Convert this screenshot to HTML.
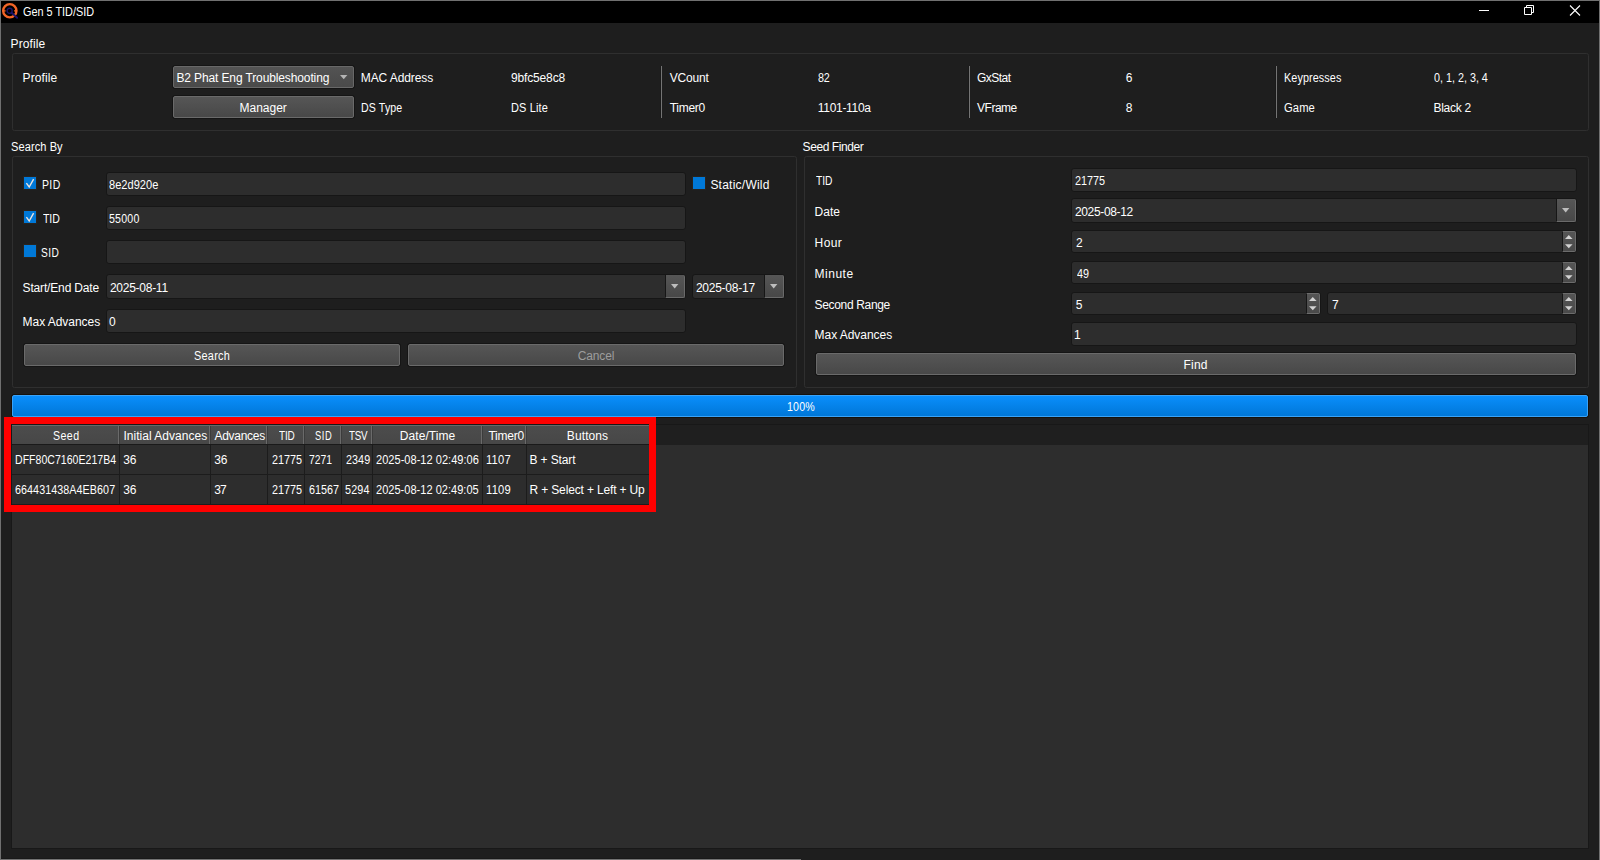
<!DOCTYPE html>
<html lang="en"><head><meta charset="utf-8"><title>Gen 5 TID/SID</title>
<style>
html,body{margin:0;padding:0;}
body{width:1600px;height:860px;background:#1e1e1e;position:relative;overflow:hidden;font-family:"Liberation Sans",sans-serif;font-size:12px;color:#fff;}
.a{position:absolute;box-sizing:border-box;}
.t{position:absolute;transform-origin:0 0;white-space:pre;line-height:14px;font-size:12px;color:#fff;}
.win{left:0;top:0;width:1600px;height:860px;border:1px solid #707070;border-bottom:none;pointer-events:none;}
.tb{left:1px;top:1px;width:1598px;height:22px;background:#000;}
.gb{border:1px solid #2f2f2f;border-radius:2.5px;}
.le{background:#2d2d2d;border:1px solid #161616;border-radius:3px;}
.btn{border:1px solid #151515;border-radius:3px;background:#151515;}
.btn i{position:absolute;left:0;top:0;right:0;bottom:0;border:1px solid #6a6a6a;border-radius:2px;background:linear-gradient(#565656,#484848);}
.combo i{border-color:#686868;background:linear-gradient(#535353,#4a4a4a);}
.db{background:linear-gradient(#565656,#484848);border-right:1px solid #6a6a6a;border-bottom:1px solid #6a6a6a;border-left:1px solid #161616;border-radius:0 2px 2px 0;}
.sb{background:linear-gradient(#555,#4a4a4a);border-top:1px solid #6c6c6c;border-right:1px solid #6c6c6c;border-bottom:1px solid #6c6c6c;border-left:1px solid #161616;border-radius:0 2px 2px 0;}
.cb{width:14px;height:14px;border:1px solid #27231f;background:#0078d7;}
.vs{width:2px;border-left:1px solid #191919;background:#747474;}
svg{position:absolute;overflow:visible;}

</style></head>
<body>
<div class="a tb"></div>
<!-- app icon -->
<svg style="left:1px;top:2px" width="18" height="18" viewBox="0 0 18 18">
<circle cx="8.8" cy="8.75" r="6.65" fill="none" stroke="#f26427" stroke-width="2.4"/>
<path d="M2 8.8h2.6M13 8.8h2.6" stroke="#f26427" stroke-width="1.3"/>
<circle cx="8.6" cy="8.8" r="2.55" fill="#000" stroke="#1d146c" stroke-width="1.3"/>
<path d="M10.6 10.8L16.1 15.8" stroke="#1d146c" stroke-width="1.9" stroke-linecap="round"/>
</svg>
<!-- window controls -->
<svg style="left:1470px;top:1px" width="120" height="22" viewBox="0 0 120 22">
<path d="M9 9.5h10" stroke="#fff" stroke-width="1"/>
<path d="M54.5 6.5h7v7h-7z M56.5 6.5v-2h7v7h-2" fill="none" stroke="#fff" stroke-width="1"/>
<path d="M100 4.5l10 10M110 4.5l-10 10" stroke="#fff" stroke-width="1.1"/>
</svg>

<!-- group boxes -->
<div class="a gb" style="left:12px;top:53px;width:1577px;height:78px"></div>
<div class="a gb" style="left:12px;top:156px;width:785px;height:232px"></div>
<div class="a gb" style="left:804px;top:156px;width:785px;height:232px"></div>

<!-- profile row -->
<div class="a btn combo" style="left:172px;top:65px;width:183px;height:24px"><i></i></div>
<svg style="left:340px;top:75px" width="8" height="5"><path d="M0 0h7.4L3.7 4.2z" fill="#b4b4b4"/></svg>
<div class="a btn" style="left:172px;top:95px;width:183px;height:24px"><i></i></div>
<div class="a vs" style="left:660px;top:66px;height:52px"></div>
<div class="a vs" style="left:968px;top:66px;height:52px"></div>
<div class="a vs" style="left:1275px;top:66px;height:52px"></div>

<!-- search by -->
<div class="a cb" style="left:23px;top:176px"></div>
<svg style="left:24px;top:177px" width="12" height="12"><path d="M2.4 6.2L5.2 10L9.6 2.2" fill="none" stroke="#ece4de" stroke-width="1.4"/></svg>
<div class="a cb" style="left:23px;top:210px"></div>
<svg style="left:24px;top:211px" width="12" height="12"><path d="M2.4 6.2L5.2 10L9.6 2.2" fill="none" stroke="#ece4de" stroke-width="1.4"/></svg>
<div class="a cb" style="left:23px;top:244px"></div>
<div class="a cb" style="left:692px;top:176px"></div>
<div class="a le" style="left:106px;top:172px;width:580px;height:24px"></div>
<div class="a le" style="left:106px;top:206px;width:580px;height:24px"></div>
<div class="a le" style="left:106px;top:240px;width:580px;height:24px"></div>
<div class="a le" style="left:106px;top:274px;width:580px;height:25px"></div>
<div class="a db" style="left:665px;top:275px;width:20px;height:23px"></div>
<svg style="left:670.5px;top:284px" width="8" height="5"><path d="M0 0h7.4L3.7 4.4z" fill="#bdbdbd"/></svg>
<div class="a le" style="left:692px;top:274px;width:93px;height:25px"></div>
<div class="a db" style="left:764px;top:275px;width:20px;height:23px"></div>
<svg style="left:769.5px;top:284px" width="8" height="5"><path d="M0 0h7.4L3.7 4.4z" fill="#bdbdbd"/></svg>
<div class="a le" style="left:106px;top:309px;width:580px;height:24px"></div>
<div class="a btn" style="left:23px;top:343px;width:378px;height:24px"><i></i></div>
<div class="a btn" style="left:407px;top:343px;width:378px;height:24px"><i></i></div>

<!-- seed finder -->
<div class="a le" style="left:1071px;top:168px;width:506px;height:24px"></div>
<div class="a le" style="left:1071px;top:198px;width:506px;height:25px"></div>
<div class="a db" style="left:1556px;top:199px;width:20px;height:23px"></div>
<svg style="left:1561.5px;top:208px" width="8" height="5"><path d="M0 0h7.4L3.7 4.4z" fill="#bdbdbd"/></svg>
<div class="a le" style="left:1071px;top:230px;width:506px;height:23px"></div>
<div class="a sb" style="left:1562px;top:231px;width:14px;height:21px"></div>
<svg style="left:1565px;top:235px" width="8" height="14"><path d="M0 4L3.8 0L7.6 4zM0 9.2h7.6L3.8 13.2z" fill="#d2d2d2"/></svg>
<div class="a le" style="left:1071px;top:261px;width:506px;height:23px"></div>
<div class="a sb" style="left:1562px;top:262px;width:14px;height:21px"></div>
<svg style="left:1565px;top:266px" width="8" height="14"><path d="M0 4L3.8 0L7.6 4zM0 9.2h7.6L3.8 13.2z" fill="#d2d2d2"/></svg>
<div class="a le" style="left:1071px;top:292px;width:250px;height:23px"></div>
<div class="a sb" style="left:1306px;top:293px;width:14px;height:21px"></div>
<svg style="left:1309px;top:297px" width="8" height="14"><path d="M0 4L3.8 0L7.6 4zM0 9.2h7.6L3.8 13.2z" fill="#d2d2d2"/></svg>
<div class="a le" style="left:1327px;top:292px;width:250px;height:23px"></div>
<div class="a sb" style="left:1562px;top:293px;width:14px;height:21px"></div>
<svg style="left:1565px;top:297px" width="8" height="14"><path d="M0 4L3.8 0L7.6 4zM0 9.2h7.6L3.8 13.2z" fill="#d2d2d2"/></svg>
<div class="a le" style="left:1071px;top:322px;width:506px;height:24px"></div>
<div class="a btn" style="left:815px;top:352px;width:762px;height:24px"><i></i></div>

<!-- progress bar -->
<div class="a" style="left:11px;top:394px;width:1578px;height:24px;border:1px solid #15110c;border-radius:3px;background:#15110c"></div>
<div class="a" style="left:12px;top:395px;width:1576px;height:22px;border:1px solid #3aa2f6;border-radius:2px;background:linear-gradient(#0a8efb,#0077d8)"></div>

<!-- table view -->
<div class="a" style="left:11px;top:424px;width:1578px;height:425px;border:1px solid #181818;background:#2d2d2d"></div>
<div class="a" style="left:12px;top:425px;width:1576px;height:20px;background:#1f1f1f"></div>
<div class="a" style="left:12px;top:425px;width:637px;height:19px;background:linear-gradient(#4c4c4c,#474747);border-top:1px solid #686868"></div>
<div class="a" style="left:12px;top:444px;width:637px;height:1px;background:#1a1a1a"></div>
<div class="a" style="left:12px;top:474px;width:637px;height:1px;background:#1c1c1c"></div>
<div class="a" style="left:12px;top:504px;width:637px;height:1px;background:#1c1c1c"></div>
<div class="a" style="left:118px;top:426px;width:1px;height:18px;background:#6a6a6a"></div>
<div class="a" style="left:119px;top:426px;width:1px;height:18px;background:#3c3c3c"></div>
<div class="a" style="left:119px;top:445px;width:1px;height:60px;background:#1c1c1c"></div>
<div class="a" style="left:209px;top:426px;width:1px;height:18px;background:#6a6a6a"></div>
<div class="a" style="left:210px;top:426px;width:1px;height:18px;background:#3c3c3c"></div>
<div class="a" style="left:210px;top:445px;width:1px;height:60px;background:#1c1c1c"></div>
<div class="a" style="left:266px;top:426px;width:1px;height:18px;background:#6a6a6a"></div>
<div class="a" style="left:267px;top:426px;width:1px;height:18px;background:#3c3c3c"></div>
<div class="a" style="left:267px;top:445px;width:1px;height:60px;background:#1c1c1c"></div>
<div class="a" style="left:303px;top:426px;width:1px;height:18px;background:#6a6a6a"></div>
<div class="a" style="left:304px;top:426px;width:1px;height:18px;background:#3c3c3c"></div>
<div class="a" style="left:304px;top:445px;width:1px;height:60px;background:#1c1c1c"></div>
<div class="a" style="left:340px;top:426px;width:1px;height:18px;background:#6a6a6a"></div>
<div class="a" style="left:341px;top:426px;width:1px;height:18px;background:#3c3c3c"></div>
<div class="a" style="left:341px;top:445px;width:1px;height:60px;background:#1c1c1c"></div>
<div class="a" style="left:371px;top:426px;width:1px;height:18px;background:#6a6a6a"></div>
<div class="a" style="left:372px;top:426px;width:1px;height:18px;background:#3c3c3c"></div>
<div class="a" style="left:372px;top:445px;width:1px;height:60px;background:#1c1c1c"></div>
<div class="a" style="left:481px;top:426px;width:1px;height:18px;background:#6a6a6a"></div>
<div class="a" style="left:482px;top:426px;width:1px;height:18px;background:#3c3c3c"></div>
<div class="a" style="left:482px;top:445px;width:1px;height:60px;background:#1c1c1c"></div>
<div class="a" style="left:525px;top:426px;width:1px;height:18px;background:#6a6a6a"></div>
<div class="a" style="left:526px;top:426px;width:1px;height:18px;background:#3c3c3c"></div>
<div class="a" style="left:526px;top:445px;width:1px;height:60px;background:#1c1c1c"></div>
<div class="a" style="left:649px;top:426px;width:1px;height:18px;background:#3c3c3c"></div>
<div class="a" style="left:649px;top:445px;width:1px;height:60px;background:#1c1c1c"></div>

<!-- red annotation -->
<div class="a" style="left:4px;top:417px;width:652px;height:95px;border:7px solid #ff0000"></div>
<div class="a" style="left:1px;top:858px;width:800px;height:1px;background:#191919"></div>
<div class="a" style="left:0;top:859px;width:801px;height:1px;background:#737373"></div>
<div class="a win"></div>

<span class="t" style="left:23.36px;top:5px;transform:scaleX(0.905);">Gen 5 TID/SID</span>
<span class="t" style="left:10.55px;top:37px;letter-spacing:0.11px;">Profile</span>
<span class="t" style="left:10.61px;top:140px;transform:scaleX(0.921);letter-spacing:0.09px;">Search By</span>
<span class="t" style="left:802.57px;top:140px;letter-spacing:-0.41px;">Seed Finder</span>
<span class="t" style="left:22.55px;top:71px;letter-spacing:0.11px;">Profile</span>
<span class="t" style="left:176.41px;top:71px;letter-spacing:-0.12px;">B2 Phat Eng Troubleshooting</span>
<span class="t" style="left:239.55px;top:101px;letter-spacing:-0.01px;">Manager</span>
<span class="t" style="left:360.82px;top:71px;letter-spacing:-0.10px;">MAC Address</span>
<span class="t" style="left:361.05px;top:101px;transform:scaleX(0.884);letter-spacing:0.14px;">DS Type</span>
<span class="t" style="left:510.92px;top:71px;letter-spacing:-0.14px;">9bfc5e8c8</span>
<span class="t" style="left:510.61px;top:101px;transform:scaleX(0.915);letter-spacing:0.16px;">DS Lite</span>
<span class="t" style="left:669.76px;top:71px;letter-spacing:-0.18px;">VCount</span>
<span class="t" style="left:669.73px;top:101px;letter-spacing:-0.28px;">Timer0</span>
<span class="t" style="left:818.07px;top:71px;transform:scaleX(0.898);letter-spacing:-0.23px;">82</span>
<span class="t" style="left:817.87px;top:101px;letter-spacing:-0.32px;">1101-110a</span>
<span class="t" style="left:976.97px;top:71px;letter-spacing:-0.53px;">GxStat</span>
<span class="t" style="left:977.12px;top:101px;letter-spacing:-0.52px;">VFrame</span>
<span class="t" style="left:1125.87px;top:71px;">6</span>
<span class="t" style="left:1125.84px;top:101px;">8</span>
<span class="t" style="left:1283.82px;top:71px;transform:scaleX(0.901);letter-spacing:0.10px;">Keypresses</span>
<span class="t" style="left:1284.42px;top:101px;transform:scaleX(0.933);letter-spacing:0.12px;">Game</span>
<span class="t" style="left:1434.37px;top:71px;transform:scaleX(0.899);letter-spacing:-0.01px;">0, 1, 2, 3, 4</span>
<span class="t" style="left:1433.45px;top:101px;letter-spacing:-0.26px;">Black 2</span>
<span class="t" style="left:42.06px;top:178px;transform:scaleX(0.874);letter-spacing:0.42px;">PID</span>
<span class="t" style="left:42.52px;top:212px;transform:scaleX(0.879);letter-spacing:-0.09px;">TID</span>
<span class="t" style="left:41.48px;top:246px;transform:scaleX(0.849);letter-spacing:0.57px;">SID</span>
<span class="t" style="left:109.25px;top:178px;transform:scaleX(0.923);letter-spacing:0.01px;">8e2d920e</span>
<span class="t" style="left:109.02px;top:212px;transform:scaleX(0.884);letter-spacing:0.24px;">55000</span>
<span class="t" style="left:710.39px;top:178px;letter-spacing:0.24px;">Static/Wild</span>
<span class="t" style="left:22.57px;top:281px;letter-spacing:-0.16px;">Start/End Date</span>
<span class="t" style="left:109.92px;top:281px;letter-spacing:-0.26px;">2025-08-11</span>
<span class="t" style="left:695.93px;top:281px;letter-spacing:-0.25px;">2025-08-17</span>
<span class="t" style="left:22.55px;top:315px;letter-spacing:-0.04px;">Max Advances</span>
<span class="t" style="left:109.05px;top:315px;">0</span>
<span class="t" style="left:193.58px;top:349px;transform:scaleX(0.907);letter-spacing:0.28px;">Search</span>
<span class="t" style="left:577.63px;top:349px;letter-spacing:-0.10px;color:#9d9d9d;">Cancel</span>
<span class="t" style="left:815.96px;top:174px;transform:scaleX(0.853);">TID</span>
<span class="t" style="left:814.56px;top:205px;letter-spacing:0.05px;">Date</span>
<span class="t" style="left:814.59px;top:236px;letter-spacing:0.39px;">Hour</span>
<span class="t" style="left:814.42px;top:267px;letter-spacing:0.55px;">Minute</span>
<span class="t" style="left:814.57px;top:298px;letter-spacing:-0.34px;">Second Range</span>
<span class="t" style="left:814.55px;top:328px;letter-spacing:-0.04px;">Max Advances</span>
<span class="t" style="left:1074.64px;top:174px;transform:scaleX(0.899);letter-spacing:-0.03px;">21775</span>
<span class="t" style="left:1074.9px;top:205px;letter-spacing:-0.34px;">2025-08-12</span>
<span class="t" style="left:1076.07px;top:236px;">2</span>
<span class="t" style="left:1076.51px;top:267px;transform:scaleX(0.898);letter-spacing:-0.09px;">49</span>
<span class="t" style="left:1075.66px;top:298px;">5</span>
<span class="t" style="left:1332.04px;top:298px;">7</span>
<span class="t" style="left:1073.91px;top:328px;">1</span>
<span class="t" style="left:1183.61px;top:358px;letter-spacing:0.16px;">Find</span>
<span class="t" style="left:786.5px;top:400px;transform:scaleX(0.886);letter-spacing:0.17px;">100%</span>
<span class="t" style="left:52.74px;top:429px;transform:scaleX(0.885);letter-spacing:0.50px;">Seed</span>
<span class="t" style="left:123.39px;top:429px;letter-spacing:0.03px;">Initial Advances</span>
<span class="t" style="left:214.41px;top:429px;letter-spacing:-0.28px;">Advances</span>
<span class="t" style="left:278.56px;top:429px;transform:scaleX(0.832);letter-spacing:-0.22px;">TID</span>
<span class="t" style="left:314.66px;top:429px;transform:scaleX(0.779);letter-spacing:0.67px;">SID</span>
<span class="t" style="left:348.6px;top:429px;transform:scaleX(0.814);letter-spacing:-0.37px;">TSV</span>
<span class="t" style="left:399.84px;top:429px;letter-spacing:0.06px;">Date/Time</span>
<span class="t" style="left:488.38px;top:429px;letter-spacing:-0.22px;">Timer0</span>
<span class="t" style="left:566.84px;top:429px;letter-spacing:0.10px;">Buttons</span>
<span class="t" style="left:15.02px;top:453px;transform:scaleX(0.876);letter-spacing:0.04px;">DFF80C7160E217B4</span>
<span class="t" style="left:123.16px;top:453px;letter-spacing:-0.17px;">36</span>
<span class="t" style="left:214.16px;top:453px;letter-spacing:-0.17px;">36</span>
<span class="t" style="left:271.8px;top:453px;transform:scaleX(0.899);letter-spacing:-0.03px;">21775</span>
<span class="t" style="left:308.81px;top:453px;transform:scaleX(0.861);letter-spacing:-0.01px;">7271</span>
<span class="t" style="left:345.57px;top:453px;transform:scaleX(0.899);letter-spacing:0.05px;">2349</span>
<span class="t" style="left:376.42px;top:453px;transform:scaleX(0.919);letter-spacing:0.03px;">2025-08-12 02:49:06</span>
<span class="t" style="left:485.63px;top:453px;transform:scaleX(0.930);letter-spacing:0.24px;">1107</span>
<span class="t" style="left:529.51px;top:453px;letter-spacing:-0.12px;">B + Start</span>
<span class="t" style="left:14.88px;top:483px;transform:scaleX(0.894);letter-spacing:0.08px;">664431438A4EB607</span>
<span class="t" style="left:123.16px;top:483px;letter-spacing:-0.17px;">36</span>
<span class="t" style="left:214.14px;top:483px;letter-spacing:-0.73px;">37</span>
<span class="t" style="left:271.8px;top:483px;transform:scaleX(0.899);letter-spacing:-0.03px;">21775</span>
<span class="t" style="left:308.5px;top:483px;transform:scaleX(0.899);letter-spacing:0.03px;">61567</span>
<span class="t" style="left:344.61px;top:483px;transform:scaleX(0.899);letter-spacing:0.19px;">5294</span>
<span class="t" style="left:376.43px;top:483px;transform:scaleX(0.919);letter-spacing:0.02px;">2025-08-12 02:49:05</span>
<span class="t" style="left:485.62px;top:483px;transform:scaleX(0.930);letter-spacing:0.28px;">1109</span>
<span class="t" style="left:529.52px;top:483px;letter-spacing:-0.15px;">R + Select + Left + Up</span>
</body></html>
